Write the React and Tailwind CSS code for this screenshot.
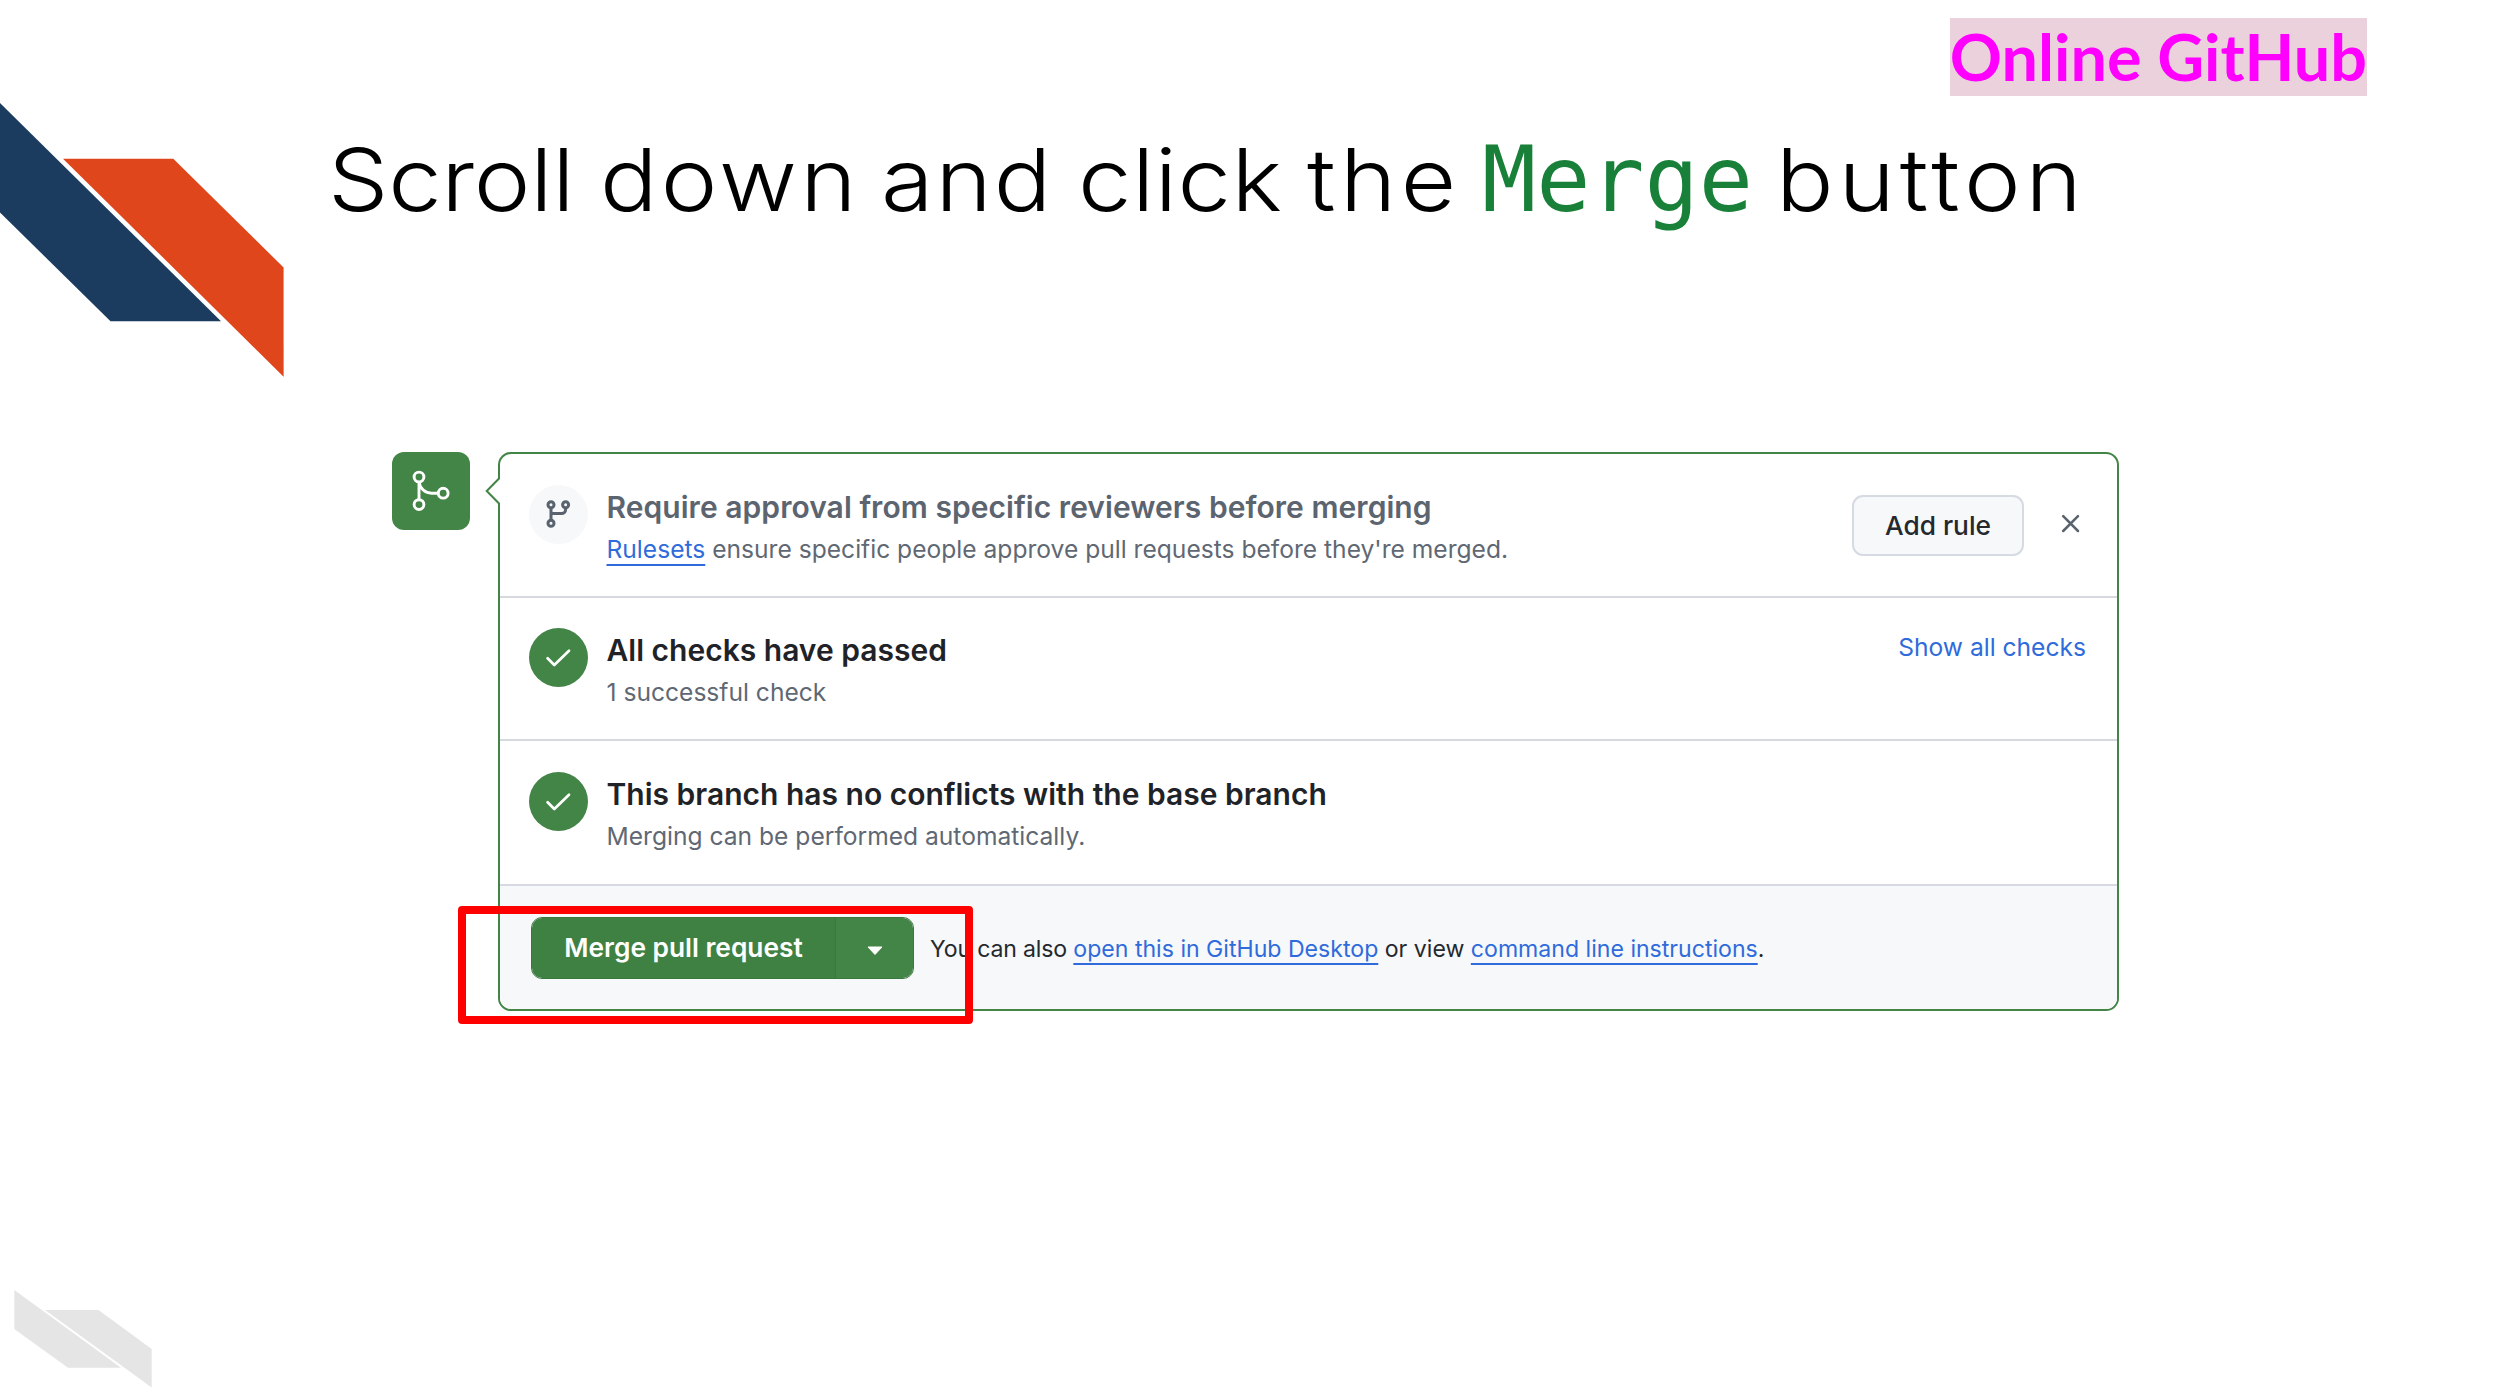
function Ribbon() {
  return (
    <svg className="absolute left-0 top-0" width="300" height="400" viewBox="0 0 300 400" aria-hidden="true">
      <polygon points="0,103 221,321.2 110.5,321.2 0,212.5" fill="#1b3c5f" />
      <polygon points="63,158.7 173.3,158.7 283.6,267.5 283.6,376.7" fill="#df461c" />
    </svg>
  );
}

function FooterRibbon() {
  return (
    <svg className="absolute bottom-0 left-0" width="170" height="108" viewBox="0 0 170 108" aria-hidden="true">
      <polygon points="14.3,10 121,87.8 68,87.8 14.3,49" fill="#e5e5e5" />
      <polygon points="45,30 98.5,30 151.7,69 151.7,107.6" fill="#e5e5e5" />
    </svg>
  );
}

function MergeIcon() {
  return (
    <svg width="78" height="78" viewBox="0 0 78 78" fill="none" stroke="#fff" strokeWidth="2.9" aria-hidden="true">
      <circle cx="27" cy="25" r="4.9" />
      <circle cx="27" cy="52.6" r="4.9" />
      <circle cx="51.2" cy="41.2" r="4.9" />
      <path d="M27 30V47.5M27 30C28 37 33.5 41.2 39.5 41.2H46.2" />
    </svg>
  );
}

function BranchIcon() {
  return (
    <svg width="58" height="58" viewBox="0 0 58 58" fill="none" stroke="#59636e" strokeWidth="3" aria-hidden="true">
      <circle cx="22" cy="19.8" r="3" />
      <circle cx="36.6" cy="19.8" r="3" />
      <circle cx="22" cy="38.2" r="3" />
      <path d="M22 23V35.5M36.6 23V24.6A4 4 0 0 1 32.6 28.6H22" />
    </svg>
  );
}

function CheckBadge() {
  return (
    <div className="size-[58.5px] shrink-0 rounded-full bg-[#438546]">
      <svg width="58" height="58" viewBox="0 0 58 58" fill="none" stroke="#fff" strokeWidth="2.7" strokeLinecap="round" strokeLinejoin="round" aria-hidden="true">
        <path d="M18.6 30.2L25.3 37L40 22.8" />
      </svg>
    </div>
  );
}

const link =
  "text-[#2f6bdb] underline decoration-2 underline-offset-[5.5px] [text-decoration-skip-ink:none]";

function RowText({ title, muted, className, children }) {
  return (
    <div className={"ml-[19px] grow whitespace-nowrap " + className}>
      <h2
        className={
          "text-[30px] leading-10 font-semibold " +
          (muted ? "tracking-[0.05px] text-[#5b646f]" : "text-[#1f2328]")
        }
      >
        {title}
      </h2>
      <p className="mt-[1.5px] text-[24.6px] leading-10 text-[#5f6873]">{children}</p>
    </div>
  );
}

export default function App() {
  return (
    <div className="relative h-[1388px] w-full overflow-hidden bg-white font-['Inter',sans-serif]">
      <Ribbon />
      <FooterRibbon />

      <div className="flex justify-end pt-[18px] pr-[133px]">
        <div className="h-[78px] bg-[#ead1dc] font-['Lato',sans-serif] text-[64.7px] leading-[76px] font-bold whitespace-nowrap text-[#ff00ff]">
          Online GitHub
        </div>
      </div>

      <h1 className="mt-[24px] flex items-baseline pl-[328px] text-[87px] leading-[120px] font-[350] whitespace-nowrap text-black">
        <span className="w-[272px] origin-left scale-x-110 tracking-[-0.3px]">Scroll</span>{" "}
        <span className="w-[281px] origin-left scale-x-110 tracking-[2.9px]">down</span>{" "}
        <span className="w-[197px] origin-left scale-x-110 tracking-[1.8px]">and</span>{" "}
        <span className="w-[229px] origin-left scale-x-110 tracking-[0.4px]">click</span>{" "}
        <span className="w-[175px] origin-left scale-x-110 tracking-[4px]">the</span>{" "}
        <span className="w-[294px] font-['DejaVu_Sans_Mono',monospace] text-[90px] font-normal text-[#188038]">Merge</span>{" "}
        <span className="w-[330px] origin-left scale-x-110 tracking-[4.5px]">button</span>
      </h1>

      <div className="relative mt-[212px] flex items-start pl-[392px]">
        <div className="size-[78px] shrink-0 rounded-xl bg-[#438546]">
          <MergeIcon />
        </div>

        <section className="relative ml-[28px] flex h-[559px] w-[1621px] shrink-0 flex-col rounded-[13px] border-2 border-[#438546] bg-white">
          <svg className="absolute top-[20px] left-[-15px]" width="16" height="34" viewBox="0 0 16 34" aria-hidden="true">
            <path d="M14.5 4.5L2 17L14.5 29.5H16V4.5Z" fill="#fff" />
            <path d="M14 3V4.5L1.7 17L14 29.5V31" fill="none" stroke="#438546" strokeWidth="2" />
          </svg>

          <div className="flex h-[144px] items-start border-b-2 border-[#d6dadf] pl-[29px]">
            <div className="mt-[31px] size-[58.5px] shrink-0 rounded-full bg-[#f6f8fa]">
              <BranchIcon />
            </div>
            <RowText muted title="Require approval from specific reviewers before merging" className="mt-[33px]">
              <a className={link}>Rulesets</a> ensure specific people approve pull requests before they're merged.
            </RowText>
            <button className="mt-[41px] flex h-[61px] w-[172px] items-center justify-center rounded-[11px] border-2 border-[#d6dae2] bg-[#f6f8fa] text-[26.3px] leading-10 font-medium text-[#25292e]">
              Add rule
            </button>
            <svg className="mt-[60px] mr-[36px] ml-[37px]" width="20" height="20" viewBox="0 0 20 20" stroke="#59636e" strokeWidth="2.5" strokeLinecap="round" aria-label="Dismiss">
              <path d="M2.2 2.2L17 17M17 2.2L2.2 17" />
            </svg>
          </div>

          <div className="flex h-[143px] items-start border-b-2 border-[#d6dadf] pl-[29px]">
            <div className="mt-[30px]">
              <CheckBadge />
            </div>
            <RowText title="All checks have passed" className="mt-[32px]">
              1 successful check
            </RowText>
            <a className="mt-[29px] mr-[31px] text-[24.6px] leading-10 text-[#2f6bdb]">Show all checks</a>
          </div>

          <div className="flex h-[145px] items-start border-b-2 border-[#d8dae3] pl-[29px]">
            <div className="mt-[31px]">
              <CheckBadge />
            </div>
            <RowText title="This branch has no conflicts with the base branch" className="mt-[33px]">
              Merging can be performed automatically.
            </RowText>
          </div>

          <div className="flex grow items-start rounded-b-[11px] bg-[#f6f8fa] pl-[31px]">
            <div className="mt-[31px] flex h-[62px] w-[383px] shrink-0 overflow-hidden rounded-[11px] border border-[#3a783d] text-white">
              <button className="w-[304px] border-r border-[#3a783d] bg-[#3f8142] text-[26.3px] leading-[60px] font-semibold whitespace-nowrap">
                Merge pull request
              </button>
              <button className="flex grow items-center justify-center bg-[#438546]" aria-label="Select merge method">
                <svg className="mt-[5px]" width="16" height="10" viewBox="0 0 16 10" aria-hidden="true">
                  <path d="M1 1H15L8 8.5Z" fill="#fff" stroke="#fff" strokeLinejoin="round" />
                </svg>
              </button>
            </div>
            <p className="mt-[43px] ml-[16px] text-[23.1px] leading-10 whitespace-nowrap text-[#25292e]">
              <span className="tracking-[-0.17px]">You can also </span>
              <a className={link}>open this in GitHub Desktop</a> or view{" "}
              <a className={link}>command line instructions</a>.
            </p>
          </div>
        </section>

        <div className="absolute top-[454px] left-[458px] h-[118px] w-[515px] rounded-[4px] border-8 border-[#ff0000]" />
      </div>
    </div>
  );
}
